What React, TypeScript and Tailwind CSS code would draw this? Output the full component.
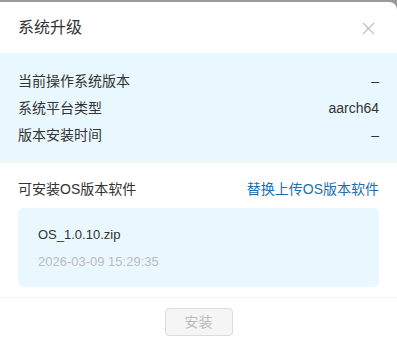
import React from "react";

export default function App() {
  const font = { fontFamily: '"Liberation Sans", "Noto Sans CJK SC", sans-serif' };
  return (
    <div className="w-[397px] h-[348px] bg-[#9a9a9a] pt-[2px] overflow-hidden" style={font}>
      <div className="bg-white h-[346px] rounded-tr-[8px] flex flex-col">
        <div className="h-[51px] flex items-center justify-between pl-[18px] pr-[22px] pt-[1px]">
          <span className="text-[16px] text-[#333]">系统升级</span>
          <svg width="13" height="13" viewBox="0 0 13 13" className="text-[#c0c0c0]">
            <path d="M1 1L12 12M12 1L1 12" stroke="currentColor" strokeWidth="1.2" fill="none" />
          </svg>
        </div>
        <div className="bg-[#e9f7fe] h-[108px] px-[18px] pt-[15px] flex flex-col text-[14px] text-[#333]">
          <div className="h-[27px] flex items-center justify-between">
            <span>当前操作系统版本</span>
            <span>–</span>
          </div>
          <div className="h-[27px] flex items-center justify-between">
            <span>系统平台类型</span>
            <span>aarch64</span>
          </div>
          <div className="h-[27px] flex items-center justify-between">
            <span>版本安装时间</span>
            <span>–</span>
          </div>
        </div>
        <div className="h-[2px] bg-[#f2f4f5]" />
        <div className="px-[18px] pt-[14px] pb-[10px] border-b border-[#f0f2f3]">
          <div className="h-[24px] flex items-center justify-between text-[14px]">
            <span className="text-[#333]">可安装OS版本软件</span>
            <span className="text-[#1b6fae]">替换上传OS版本软件</span>
          </div>
          <div className="mt-[7px] h-[79px] bg-[#e9f7fe] rounded-[6px] pl-[20px] flex flex-col">
            <div className="mt-[17px] h-[20px] flex items-center text-[13px] text-[#333]">OS_1.0.10.zip</div>
            <div className="mt-[7px] h-[20px] flex items-center text-[13px] text-[#bcbcbc]">2026-03-09 15:29:35</div>
          </div>
        </div>
        <div className="flex justify-center pt-[10px]">
          <button className="w-[68px] h-[28px] bg-[#f5f5f5] border border-[#dcdcdc] rounded-[4px] text-[14px] text-[#bcbcbc]">
            安装
          </button>
        </div>
      </div>
    </div>
  );
}
